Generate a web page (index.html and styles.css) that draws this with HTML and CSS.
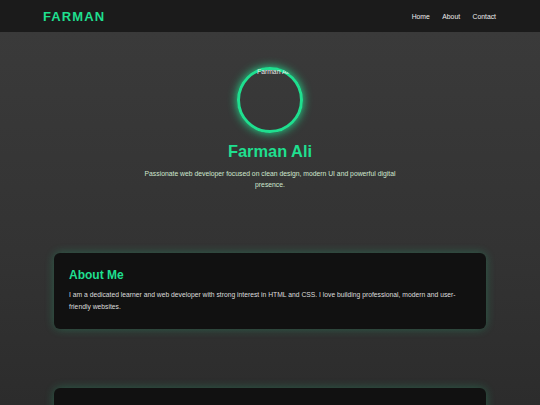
FILE: index.html
```html
<!DOCTYPE html>
<html lang="en">
<head>
<meta charset="utf-8">
<title>Farman Ali</title>
<link rel="stylesheet" href="styles.css">
</head>
<body>
<header class="topbar">
  <div class="logo">FARMAN</div>
  <nav class="nav">
    <a href="#">Home</a>
    <a href="#">About</a>
    <a href="#">Contact</a>
  </nav>
</header>
<main class="page">
  <section class="hero">
    <div class="avatar">
      <div class="alt-clip"><span class="alt">Farman Ali</span></div>
    </div>
    <h1 class="name">Farman Ali</h1>
    <p class="tagline">Passionate web developer focused on clean design, modern UI and powerful digital presence.</p>
  </section>
  <section class="card">
    <h2 class="card-title">About Me</h2>
    <p class="card-text">I am a dedicated learner and web developer with strong interest in HTML and CSS. I love building professional, modern and user-friendly websites.</p>
  </section>
  <section class="card">
    <h2 class="card-title">Contact Me</h2>
    <p class="card-text">Feel free to reach out for collaborations or just a friendly hello.</p>
  </section>
</main>
</body>
</html>
```
FILE: styles.css
```css
html, body {
  margin: 0;
  padding: 0;
}
body {
  font-family: "Liberation Sans", Arial, sans-serif;
  background: linear-gradient(180deg, #3b3b3b 0px, #333333 250px, #2c2c2c 405px, #2a2a2a 100%);
  min-height: 100vh;
  color: #ddd;
}
.topbar {
  height: 32px;
  background: #1b1b1b;
  display: flex;
  align-items: center;
  justify-content: space-between;
  padding: 0 44px 0 43px;
}
.logo {
  color: #1fdf8f;
  font-weight: bold;
  font-size: 13px;
  letter-spacing: 1.1px;
}
.nav {
  display: flex;
  gap: 12.5px;
}
.nav a {
  color: #eeeeee;
  text-decoration: none;
  font-size: 6.8px;
}
.page {
  display: flex;
  flex-direction: column;
  align-items: center;
}
.hero {
  display: flex;
  flex-direction: column;
  align-items: center;
  padding-top: 35px;
}
.avatar {
  position: relative;
  width: 60px;
  height: 60px;
  border: 3px solid #1fdf8f;
  border-radius: 50%;
  box-shadow: 0 0 10px #1fdf8f;
}
.alt-clip {
  position: absolute;
  top: -3px;
  left: -3px;
  width: 66px;
  height: 66px;
  border-radius: 50%;
  overflow: hidden;
}
.alt {
  position: absolute;
  top: 1px;
  left: 20px;
  font-size: 6.8px;
  color: #e6e6e6;
  white-space: nowrap;
}
.name {
  color: #1fdf8f;
  font-size: 16.4px;
  font-weight: bold;
  margin: 8.6px 0 0;
}
.tagline {
  margin: 7px 0 0;
  width: 256px;
  text-align: center;
  font-size: 6.8px;
  line-height: 11px;
  color: #cfe6cf;
}
.card {
  box-sizing: border-box;
  width: 432px;
  background: #111111;
  border-radius: 6px;
  padding: 15px 15px 15px;
  box-shadow: 0 0 10px rgba(31, 223, 143, 0.28);
  margin-top: 63.5px;
}
.card + .card {
  margin-top: 59px;
}
.card-title {
  margin: 0;
  color: #1fdf8f;
  font-size: 12px;
  font-weight: bold;
}
.card-text {
  margin: 6.5px 0 0;
  font-size: 6.75px;
  line-height: 12.5px;
  color: #dddddd;
}
```
